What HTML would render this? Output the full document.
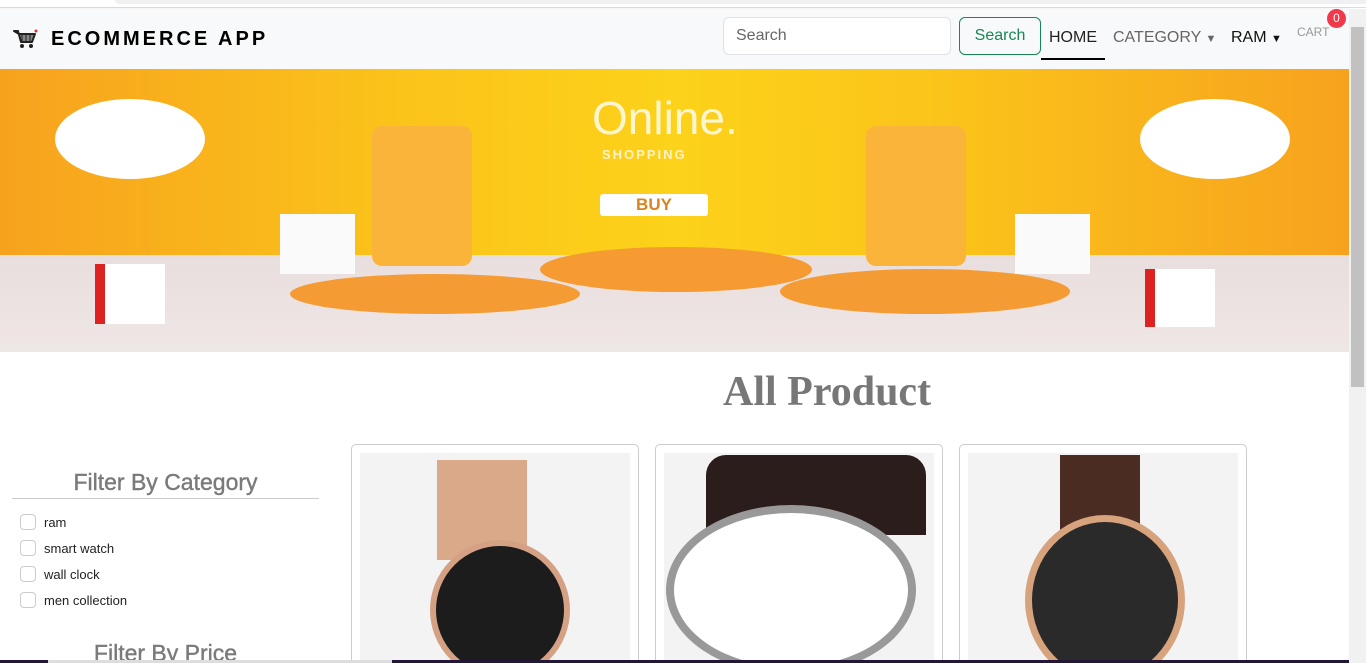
<!DOCTYPE html>
<html><head><meta charset="utf-8"><style>
*{margin:0;padding:0;box-sizing:border-box}
html,body{width:1366px;height:663px;overflow:hidden}
body{background:#fff;font-family:"Liberation Sans",sans-serif;position:relative}
.abs{position:absolute}
.card{position:absolute;top:444px;width:288px;height:216px;border:1px solid #ccc;border-bottom:none;border-radius:5px 5px 0 0;overflow:hidden}
</style></head><body>
<div class="abs" style="left:0;top:0;width:1366px;height:8px;background:#fff;border-bottom:1px solid #ddd"></div>
<div class="abs" style="left:115px;top:0;width:1265px;height:4px;background:#eff0f2;border-radius:0 0 8px 8px"></div>
<div class="abs" style="left:0;top:9px;width:1349px;height:60px;background:#f8f9fa;box-shadow:0 2px 4px rgba(0,0,0,.35)"></div>
<svg class="abs" style="left:13px;top:28px" width="25" height="22" viewBox="0 0 25 22"><path d="M1 3h4l3 11h11l3-8H6z" fill="#888" stroke="#222" stroke-width="2" stroke-linejoin="round"/><path d="M9 7v6M13 7v6M17 7v6" stroke="#222" stroke-width="1"/><circle cx="9" cy="18" r="2" fill="#222"/><circle cx="18" cy="18" r="2" fill="#222"/><circle cx="23" cy="3" r="1.5" fill="#d33"/></svg>
<div class="abs" style="left:51px;top:28px;font-size:20px;font-weight:bold;letter-spacing:3px;color:#000">ECOMMERCE APP</div>
<div class="abs" style="left:723px;top:17px;width:228px;height:38px;border:1px solid #dee2e6;border-radius:6px;background:#fff;font-size:16px;color:#666;padding:9px 12px">Search</div>
<div class="abs" style="left:959px;top:17px;width:82px;height:38px;border:1px solid #198754;border-radius:6px;font-size:16px;color:#198754;padding:9px 0;text-align:center">Search</div>
<div class="abs" style="left:1049px;top:29px;font-size:16px;color:#222">HOME</div>
<div class="abs" style="left:1041px;top:58px;width:64px;height:2px;background:#000"></div>
<div class="abs" style="left:1113px;top:29px;font-size:16px;color:#666">CATEGORY <span style="font-size:11px">▼</span></div>
<div class="abs" style="left:1231px;top:29px;font-size:16px;color:#111">RAM <span style="font-size:11px">▼</span></div>
<div class="abs" style="left:1297px;top:25px;font-size:12px;color:#999">CART</div>
<div class="abs" style="left:1327px;top:9px;width:19px;height:19px;border-radius:50%;background:#f0394a;color:#fff;font-size:12px;text-align:center;line-height:18px">0</div>
<div class="abs" style="left:1349px;top:9px;width:17px;height:654px;background:#f1f1f1"></div>
<div class="abs" style="left:1351px;top:27px;width:13px;height:360px;background:#c1c1c1"></div>
<div class="abs" style="left:0;top:69px;width:1349px;height:283px;background:linear-gradient(90deg,#f7a21e,#fbc41a 30%,#fcd21a 50%,#fbc41a 70%,#f7a21e);overflow:hidden">
 <div class="abs" style="left:0;top:186px;width:1349px;height:97px;background:linear-gradient(#e9dede,#efe6e6)"></div>
 <div class="abs" style="left:55px;top:30px;width:150px;height:80px;border-radius:50%;background:#fff"></div>
 <div class="abs" style="left:1140px;top:30px;width:150px;height:80px;border-radius:50%;background:#fff"></div>
 <div class="abs" style="left:592px;top:22px;font-size:46px;color:#fff6d0">Online.</div>
 <div class="abs" style="left:602px;top:78px;font-size:13px;color:#fff3c4;letter-spacing:2px;font-weight:bold">SHOPPING</div>
 <div class="abs" style="left:600px;top:125px;width:108px;height:22px;background:#fff;border-radius:3px;color:#d8841d;font-weight:bold;text-align:center;font-size:17px;line-height:22px">BUY</div>
 <div class="abs" style="left:372px;top:57px;width:100px;height:140px;background:#fbb43a;border-radius:10px"></div>
 <div class="abs" style="left:866px;top:57px;width:100px;height:140px;background:#fbb43a;border-radius:10px"></div>
 <div class="abs" style="left:540px;top:178px;width:272px;height:45px;background:#f69a32;border-radius:50%"></div>
 <div class="abs" style="left:290px;top:205px;width:290px;height:40px;background:#f59b33;border-radius:50%"></div>
 <div class="abs" style="left:780px;top:200px;width:290px;height:45px;background:#f59b33;border-radius:50%"></div>
 <div class="abs" style="left:95px;top:195px;width:70px;height:60px;background:#fff;border-left:10px solid #d22"></div>
 <div class="abs" style="left:1145px;top:200px;width:70px;height:58px;background:#fff;border-left:10px solid #d22"></div>
 <div class="abs" style="left:280px;top:145px;width:75px;height:60px;background:#fafafa"></div>
 <div class="abs" style="left:1015px;top:145px;width:75px;height:60px;background:#fafafa"></div>
</div>
<div class="abs" style="left:723px;top:368px;font-family:'Liberation Serif',serif;font-size:42px;font-weight:bold;color:#777">All Product</div>
<div class="abs" style="left:12px;top:469px;width:307px;text-align:center;font-size:23px;color:#7a7a7a;padding-bottom:2px;border-bottom:1px solid #ccc;-webkit-text-stroke:.4px #7a7a7a">Filter By Category</div>
<div class="abs" style="left:20px;top:510px;font-size:13px;color:#222;line-height:26px">
<div><span style="display:inline-block;width:16px;height:16px;border:1px solid #ccc;border-radius:4px;vertical-align:-3px;margin-right:8px"></span>ram</div>
<div><span style="display:inline-block;width:16px;height:16px;border:1px solid #ccc;border-radius:4px;vertical-align:-3px;margin-right:8px"></span>smart watch</div>
<div><span style="display:inline-block;width:16px;height:16px;border:1px solid #ccc;border-radius:4px;vertical-align:-3px;margin-right:8px"></span>wall clock</div>
<div><span style="display:inline-block;width:16px;height:16px;border:1px solid #ccc;border-radius:4px;vertical-align:-3px;margin-right:8px"></span>men collection</div>
</div>
<div class="abs" style="left:12px;top:640px;width:307px;text-align:center;font-size:23px;color:#7a7a7a;-webkit-text-stroke:.4px #7a7a7a">Filter By Price</div>
<div class="card" style="left:351px"><div class="abs" style="left:8px;top:8px;width:270px;height:220px;background:#f3f3f3"></div>
 <div class="abs" style="left:85px;top:15px;width:90px;height:100px;background:#d9a98a"></div>
 <div class="abs" style="left:78px;top:95px;width:140px;height:140px;border-radius:50%;background:#1c1c1c;border:6px solid #d4a184"></div></div>
<div class="card" style="left:655px"><div class="abs" style="left:8px;top:8px;width:270px;height:220px;background:#f3f3f3"></div>
 <div class="abs" style="left:50px;top:10px;width:220px;height:80px;background:#2b1d1b;border-radius:20px 20px 0 0"></div>
 <div class="abs" style="left:10px;top:60px;width:250px;height:170px;border-radius:50%;background:#fff;border:8px solid #999"></div></div>
<div class="card" style="left:959px"><div class="abs" style="left:8px;top:8px;width:270px;height:220px;background:#f3f3f3"></div>
 <div class="abs" style="left:100px;top:10px;width:80px;height:100px;background:#4a2c22"></div>
 <div class="abs" style="left:65px;top:70px;width:160px;height:170px;border-radius:50%;background:#2a2a2a;border:7px solid #d6a37d"></div></div>
<div class="abs" style="left:0;top:660px;width:1349px;height:3px;background:#241636"></div>
<div class="abs" style="left:48px;top:660px;width:344px;height:3px;background:#ddd"></div>
</body></html>
